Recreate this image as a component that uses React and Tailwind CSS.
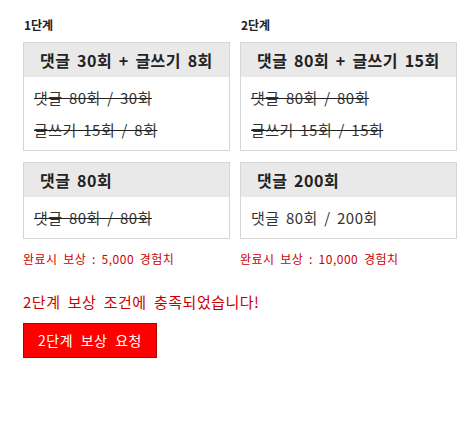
const stages = [
  {
    label: "1단계",
    width: "w-[207px]",
    cards: [
      {
        title: "댓글 30회 + 글쓰기 8회",
        rows: [
          { text: "댓글 80회 / 30회", done: true },
          { text: "글쓰기 15회 / 8회", done: true },
        ],
      },
      {
        title: "댓글 80회",
        rows: [{ text: "댓글 80회 / 80회", done: true }],
      },
    ],
    reward: "완료시 보상 : 5,000 경험치",
  },
  {
    label: "2단계",
    width: "w-[217px]",
    cards: [
      {
        title: "댓글 80회 + 글쓰기 15회",
        rows: [
          { text: "댓글 80회 / 80회", done: true },
          { text: "글쓰기 15회 / 15회", done: true },
        ],
      },
      {
        title: "댓글 200회",
        rows: [{ text: "댓글 80회 / 200회", done: false }],
      },
    ],
    reward: "완료시 보상 : 10,000 경험치",
  },
];

function MissionCard({ title, rows }) {
  return (
    <div className="border border-[#d6d6d6] bg-white">
      <div className="h-[34px] bg-[#e9e9e9] pl-4 text-[16px] font-bold leading-[34px] text-[#222] whitespace-nowrap">
        {title}
      </div>
      <div className="pt-[5px] pb-[4px] pl-[10px]">
        {rows.map((row) => (
          <div
            key={row.text}
            className={
              "h-8 text-[15px] leading-8 text-[#333] whitespace-nowrap " +
              (row.done ? "line-through decoration-[#222]" : "")
            }
          >
            {row.text}
          </div>
        ))}
      </div>
    </div>
  );
}

export default function App() {
  return (
    <div
      className="min-h-[421px] bg-white pl-[23px] pt-[17px] tracking-[0.5px] [word-spacing:2.5px]"
      style={{ fontFamily: '"Noto Sans CJK KR", "Noto Sans", sans-serif' }}
    >
      <div className="flex gap-[10px]">
        {stages.map((stage) => (
          <div key={stage.label} className={"shrink-0 " + stage.width}>
            <div className="mb-[9px] h-4 pl-px text-[12px] font-bold leading-4 tracking-normal text-[#222]">
              {stage.label}
            </div>
            <div className="flex flex-col gap-[11px]">
              {stage.cards.map((card) => (
                <MissionCard key={card.title} {...card} />
              ))}
            </div>
            <div className="mt-3 h-4 text-[12px] leading-4 text-[#cc0000] whitespace-nowrap">
              {stage.reward}
            </div>
          </div>
        ))}
      </div>

      <p className="mt-[25px] h-5 text-[15px] leading-5 text-[#cc0000] [word-spacing:3.5px]">
        2단계 보상 조건에 충족되었습니다!
      </p>

      <button
        type="button"
        className="mt-[11px] h-[35px] w-[134px] border border-[#b80000] bg-[#ff0000] text-[14px] text-white [word-spacing:4px]"
      >
        2단계 보상 요청
      </button>
    </div>
  );
}
